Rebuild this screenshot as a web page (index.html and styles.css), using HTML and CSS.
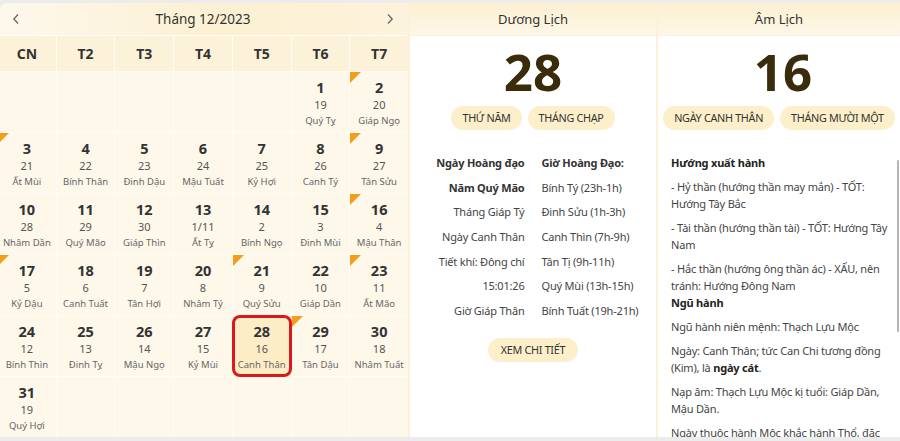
FILE: index.html
```html
<!DOCTYPE html>
<html lang="vi">
<head>
    <meta charset="UTF-8">
    <meta name="viewport" content="width=device-width, initial-scale=1.0">
    <title>Lịch Vạn Niên - Tháng 12/2023</title>
    <link rel="stylesheet" href="styles.css">
</head>
<body>
    <div class="app">
        <section class="calendar">
            <div class="cal-head">
                <button class="nav" aria-label="Tháng trước">
                    <svg width="8" height="12" viewBox="0 0 8 12"><path d="M6 1.5 1.8 6 6 10.5" fill="none" stroke="#666" stroke-width="1.3"/></svg>
                </button>
                <span class="cal-title">Tháng 12/2023</span>
                <button class="nav" aria-label="Tháng sau">
                    <svg width="8" height="12" viewBox="0 0 8 12"><path d="M2 1.5 6.2 6 2 10.5" fill="none" stroke="#666" stroke-width="1.3"/></svg>
                </button>
            </div>
            <div class="weekdays">
                <span>CN</span><span>T2</span><span>T3</span><span>T4</span><span>T5</span><span>T6</span><span>T7</span>
            </div>
            <div class="days">
                <div class="day empty"></div>
                <div class="day empty"></div>
                <div class="day empty"></div>
                <div class="day empty"></div>
                <div class="day empty"></div>
                <div class="day"><b>1</b><span class="lunar-day">19</span><span class="can-chi">Quý Tỵ</span></div>
                <div class="day mark"><b>2</b><span class="lunar-day">20</span><span class="can-chi">Giáp Ngọ</span></div>

                <div class="day mark"><b>3</b><span class="lunar-day">21</span><span class="can-chi">Ất Mùi</span></div>
                <div class="day"><b>4</b><span class="lunar-day">22</span><span class="can-chi">Bính Thân</span></div>
                <div class="day"><b>5</b><span class="lunar-day">23</span><span class="can-chi">Đinh Dậu</span></div>
                <div class="day"><b>6</b><span class="lunar-day">24</span><span class="can-chi">Mậu Tuất</span></div>
                <div class="day"><b>7</b><span class="lunar-day">25</span><span class="can-chi">Kỷ Hợi</span></div>
                <div class="day"><b>8</b><span class="lunar-day">26</span><span class="can-chi">Canh Tý</span></div>
                <div class="day mark"><b>9</b><span class="lunar-day">27</span><span class="can-chi">Tân Sửu</span></div>

                <div class="day"><b>10</b><span class="lunar-day">28</span><span class="can-chi">Nhâm Dần</span></div>
                <div class="day"><b>11</b><span class="lunar-day">29</span><span class="can-chi">Quý Mão</span></div>
                <div class="day"><b>12</b><span class="lunar-day">30</span><span class="can-chi">Giáp Thìn</span></div>
                <div class="day"><b>13</b><span class="lunar-day">1/11</span><span class="can-chi">Ất Tỵ</span></div>
                <div class="day"><b>14</b><span class="lunar-day">2</span><span class="can-chi">Bính Ngọ</span></div>
                <div class="day"><b>15</b><span class="lunar-day">3</span><span class="can-chi">Đinh Mùi</span></div>
                <div class="day mark"><b>16</b><span class="lunar-day">4</span><span class="can-chi">Mậu Thân</span></div>

                <div class="day mark"><b>17</b><span class="lunar-day">5</span><span class="can-chi">Kỷ Dậu</span></div>
                <div class="day"><b>18</b><span class="lunar-day">6</span><span class="can-chi">Canh Tuất</span></div>
                <div class="day"><b>19</b><span class="lunar-day">7</span><span class="can-chi">Tân Hợi</span></div>
                <div class="day"><b>20</b><span class="lunar-day">8</span><span class="can-chi">Nhâm Tý</span></div>
                <div class="day mark"><b>21</b><span class="lunar-day">9</span><span class="can-chi">Quý Sửu</span></div>
                <div class="day"><b>22</b><span class="lunar-day">10</span><span class="can-chi">Giáp Dần</span></div>
                <div class="day mark"><b>23</b><span class="lunar-day">11</span><span class="can-chi">Ất Mão</span></div>

                <div class="day"><b>24</b><span class="lunar-day">12</span><span class="can-chi">Bính Thìn</span></div>
                <div class="day"><b>25</b><span class="lunar-day">13</span><span class="can-chi">Đinh Tỵ</span></div>
                <div class="day"><b>26</b><span class="lunar-day">14</span><span class="can-chi">Mậu Ngọ</span></div>
                <div class="day"><b>27</b><span class="lunar-day">15</span><span class="can-chi">Kỷ Mùi</span></div>
                <div class="day selected"><b>28</b><span class="lunar-day">16</span><span class="can-chi">Canh Thân</span></div>
                <div class="day mark"><b>29</b><span class="lunar-day">17</span><span class="can-chi">Tân Dậu</span></div>
                <div class="day"><b>30</b><span class="lunar-day">18</span><span class="can-chi">Nhâm Tuất</span></div>

                <div class="day"><b>31</b><span class="lunar-day">19</span><span class="can-chi">Quý Hợi</span></div>
                <div class="day empty"></div>
                <div class="day empty"></div>
                <div class="day empty"></div>
                <div class="day empty"></div>
                <div class="day empty"></div>
                <div class="day empty"></div>
            </div>
        </section>

        <section class="panel solar">
            <div class="panel-head">Dương Lịch</div>
            <div class="big-date">28</div>
            <div class="pills">
                <span class="pill">THỨ NĂM</span>
                <span class="pill">THÁNG CHẠP</span>
            </div>
            <div class="info">
                <div class="info-left">
                    <p class="strong">Ngày Hoàng đạo</p>
                    <p class="strong">Năm Quý Mão</p>
                    <p>Tháng Giáp Tý</p>
                    <p>Ngày Canh Thân</p>
                    <p>Tiết khí: Đông chí</p>
                    <p>15:01:26</p>
                    <p>Giờ Giáp Thân</p>
                </div>
                <div class="info-right">
                    <p class="strong">Giờ Hoàng Đạo:</p>
                    <p>Bính Tý (23h-1h)</p>
                    <p>Đinh Sửu (1h-3h)</p>
                    <p>Canh Thìn (7h-9h)</p>
                    <p>Tân Tị (9h-11h)</p>
                    <p>Quý Mùi (13h-15h)</p>
                    <p>Bính Tuất (19h-21h)</p>
                </div>
            </div>
            <button class="pill more">XEM CHI TIẾT</button>
        </section>

        <section class="panel lunar">
            <div class="panel-head">Âm Lịch</div>
            <div class="big-date">16</div>
            <div class="pills">
                <span class="pill">NGÀY CANH THÂN</span>
                <span class="pill">THÁNG MƯỜI MỘT</span>
            </div>
            <div class="details">
                <h4>Hướng xuất hành</h4>
                <p>- Hỷ thần (hướng thần may mắn) - TỐT:<br>Hướng Tây Bắc</p>
                <p>- Tài thần (hướng thần tài) - TỐT: Hướng Tây<br>Nam</p>
                <p>- Hắc thần (hướng ông thần ác) - XẤU, nên<br>tránh: Hướng Đông Nam</p>
                <h4>Ngũ hành</h4>
                <p>Ngũ hành niên mệnh: Thạch Lựu Mộc</p>
                <p>Ngày: Canh Thân; tức Can Chi tương đồng<br>(Kim), là <b>ngày cát</b>.</p>
                <p>Nạp âm: Thạch Lựu Mộc kị tuổi: Giáp Dần,<br>Mậu Dần.</p>
                <p>Ngày thuộc hành Mộc khắc hành Thổ, đặc<br>biệt tuổi: Canh Ngọ, Mậu Thân, Bính Thìn<br>thuộc hành Thổ không sợ Mộc.</p>
            </div>
        </section>
    </div>
</body>
</html>
```

FILE: styles.css
```css
body {
    margin: 0;
    background: #ececec;
    font-family: "Noto Sans", "Open Sans", sans-serif;
    color: #333;
}
.app {
    display: flex;
    height: 434px;
    margin-top: 3px;
    background: #fff;
    border-radius: 8px 0 0 0;
    overflow: hidden;
}

/* calendar */
.calendar {
    width: 410px;
    margin-left: -2px;
    flex-shrink: 0;
    display: flex;
    flex-direction: column;
    background: #fdf5e2;
}
.cal-head {
    height: 32px;
    display: flex;
    align-items: center;
    justify-content: space-between;
    padding: 0 10px 0 10px;
    background: linear-gradient(90deg, #fdf8ec 0%, #fcf0d2 55%, #fdf3dc 100%);
}
.cal-title {
    font-size: 13.5px;
    color: #333;
}
.nav {
    border: 0;
    background: none;
    padding: 0 4px;
    height: 20px;
    display: flex;
    align-items: center;
    cursor: pointer;
}
.weekdays {
    display: grid;
    grid-template-columns: repeat(7, 1fr);
    gap: 1px;
    height: 35px;
    padding-top: 1px;
    background: #fffcf5;
}
.weekdays span {
    display: flex;
    align-items: center;
    justify-content: center;
    font-weight: 700;
    font-size: 14px;
    color: #333;
    background: #fcf2d9;
}
.days {
    flex: 1;
    display: grid;
    grid-template-columns: repeat(7, 1fr);
    grid-template-rows: repeat(6, 1fr);
    gap: 1px;
    padding-top: 1px;
    background: #fffcf5;
}
.day {
    position: relative;
    display: flex;
    flex-direction: column;
    align-items: center;
    padding-top: 6px;
    background: #fdf8ea;
}
.day b {
    font-size: 14.5px;
    line-height: 19px;
    color: #333;
}
.lunar-day {
    font-size: 11px;
    line-height: 16px;
    color: #555;
}
.can-chi {
    font-size: 9.5px;
    line-height: 15px;
    color: #666;
}
.day.mark::before {
    content: "";
    position: absolute;
    top: 0;
    left: 0;
    border-top: 11px solid #f69c18;
    border-right: 11px solid transparent;
}
.day.selected {
    background: #fdedc6;
}
.day.selected::after {
    content: "";
    position: absolute;
    inset: -1px;
    border: 3px solid #d9191f;
    border-radius: 8px;
}

/* side panels */
.panel {
    position: relative;
    display: flex;
    flex-direction: column;
    align-items: center;
    background: #fff;
    min-width: 0;
}
.solar {
    width: 246px;
    flex-shrink: 0;
    border-left: 2px solid #fcf2d9;
    border-right: 2px solid #fcf2d9;
}
.lunar {
    flex: 1;
}
.panel-head {
    align-self: stretch;
    height: 32px;
    line-height: 32px;
    text-align: center;
    font-size: 13px;
    color: #333;
    background: linear-gradient(180deg, #fcf0d0 0%, #fdf7e8 100%);
    border-bottom: 1px solid #fbf1da;
}
.big-date {
    margin-top: 7px;
    font-size: 51px;
    line-height: 56px;
    font-weight: 700;
    color: #3a2b0b;
}
.lunar .big-date {
    padding-left: 8px;
}
.pills {
    display: flex;
    gap: 6px;
    margin-top: 7px;
}
.pill {
    display: inline-block;
    height: 24px;
    line-height: 24px;
    padding: 0 11px;
    border: 0;
    border-radius: 12px;
    background: #fcefca;
    font-family: inherit;
    font-size: 10.8px;
    letter-spacing: -0.3px;
    color: #333;
    white-space: nowrap;
}
.info {
    display: grid;
    grid-template-columns: 1fr 1fr;
    column-gap: 17px;
    align-self: stretch;
    margin-top: 21px;
}
.info p {
    margin: 0;
    height: 24.7px;
    line-height: 24px;
    font-size: 11px;
    letter-spacing: -0.2px;
    color: #444;
    white-space: nowrap;
}
.info-left {
    text-align: right;
}
.info .strong {
    font-weight: 700;
    color: #333;
}
.more {
    margin-top: 14px;
    padding: 0 13px;
    cursor: pointer;
}

.details {
    align-self: stretch;
    flex: 1;
    margin-top: 15px;
    padding: 9px 4px 0 13px;
    overflow: hidden;
    font-size: 11px;
    letter-spacing: -0.2px;
    line-height: 17px;
    color: #444;
    white-space: nowrap;
}
.details h4 {
    margin: 0 0 7px;
    font-size: 11px;
    color: #222;
}
.details p {
    margin: 0 0 7px;
}
.details p + h4 {
    margin-top: -7px;
}
.details b {
    color: #222;
}
/* scroll thumb of the details list */
.lunar::after {
    content: "";
    position: absolute;
    right: 1px;
    top: 157px;
    width: 2px;
    height: 172px;
    border-radius: 1px;
    background: #b4b4b4;
}
```
